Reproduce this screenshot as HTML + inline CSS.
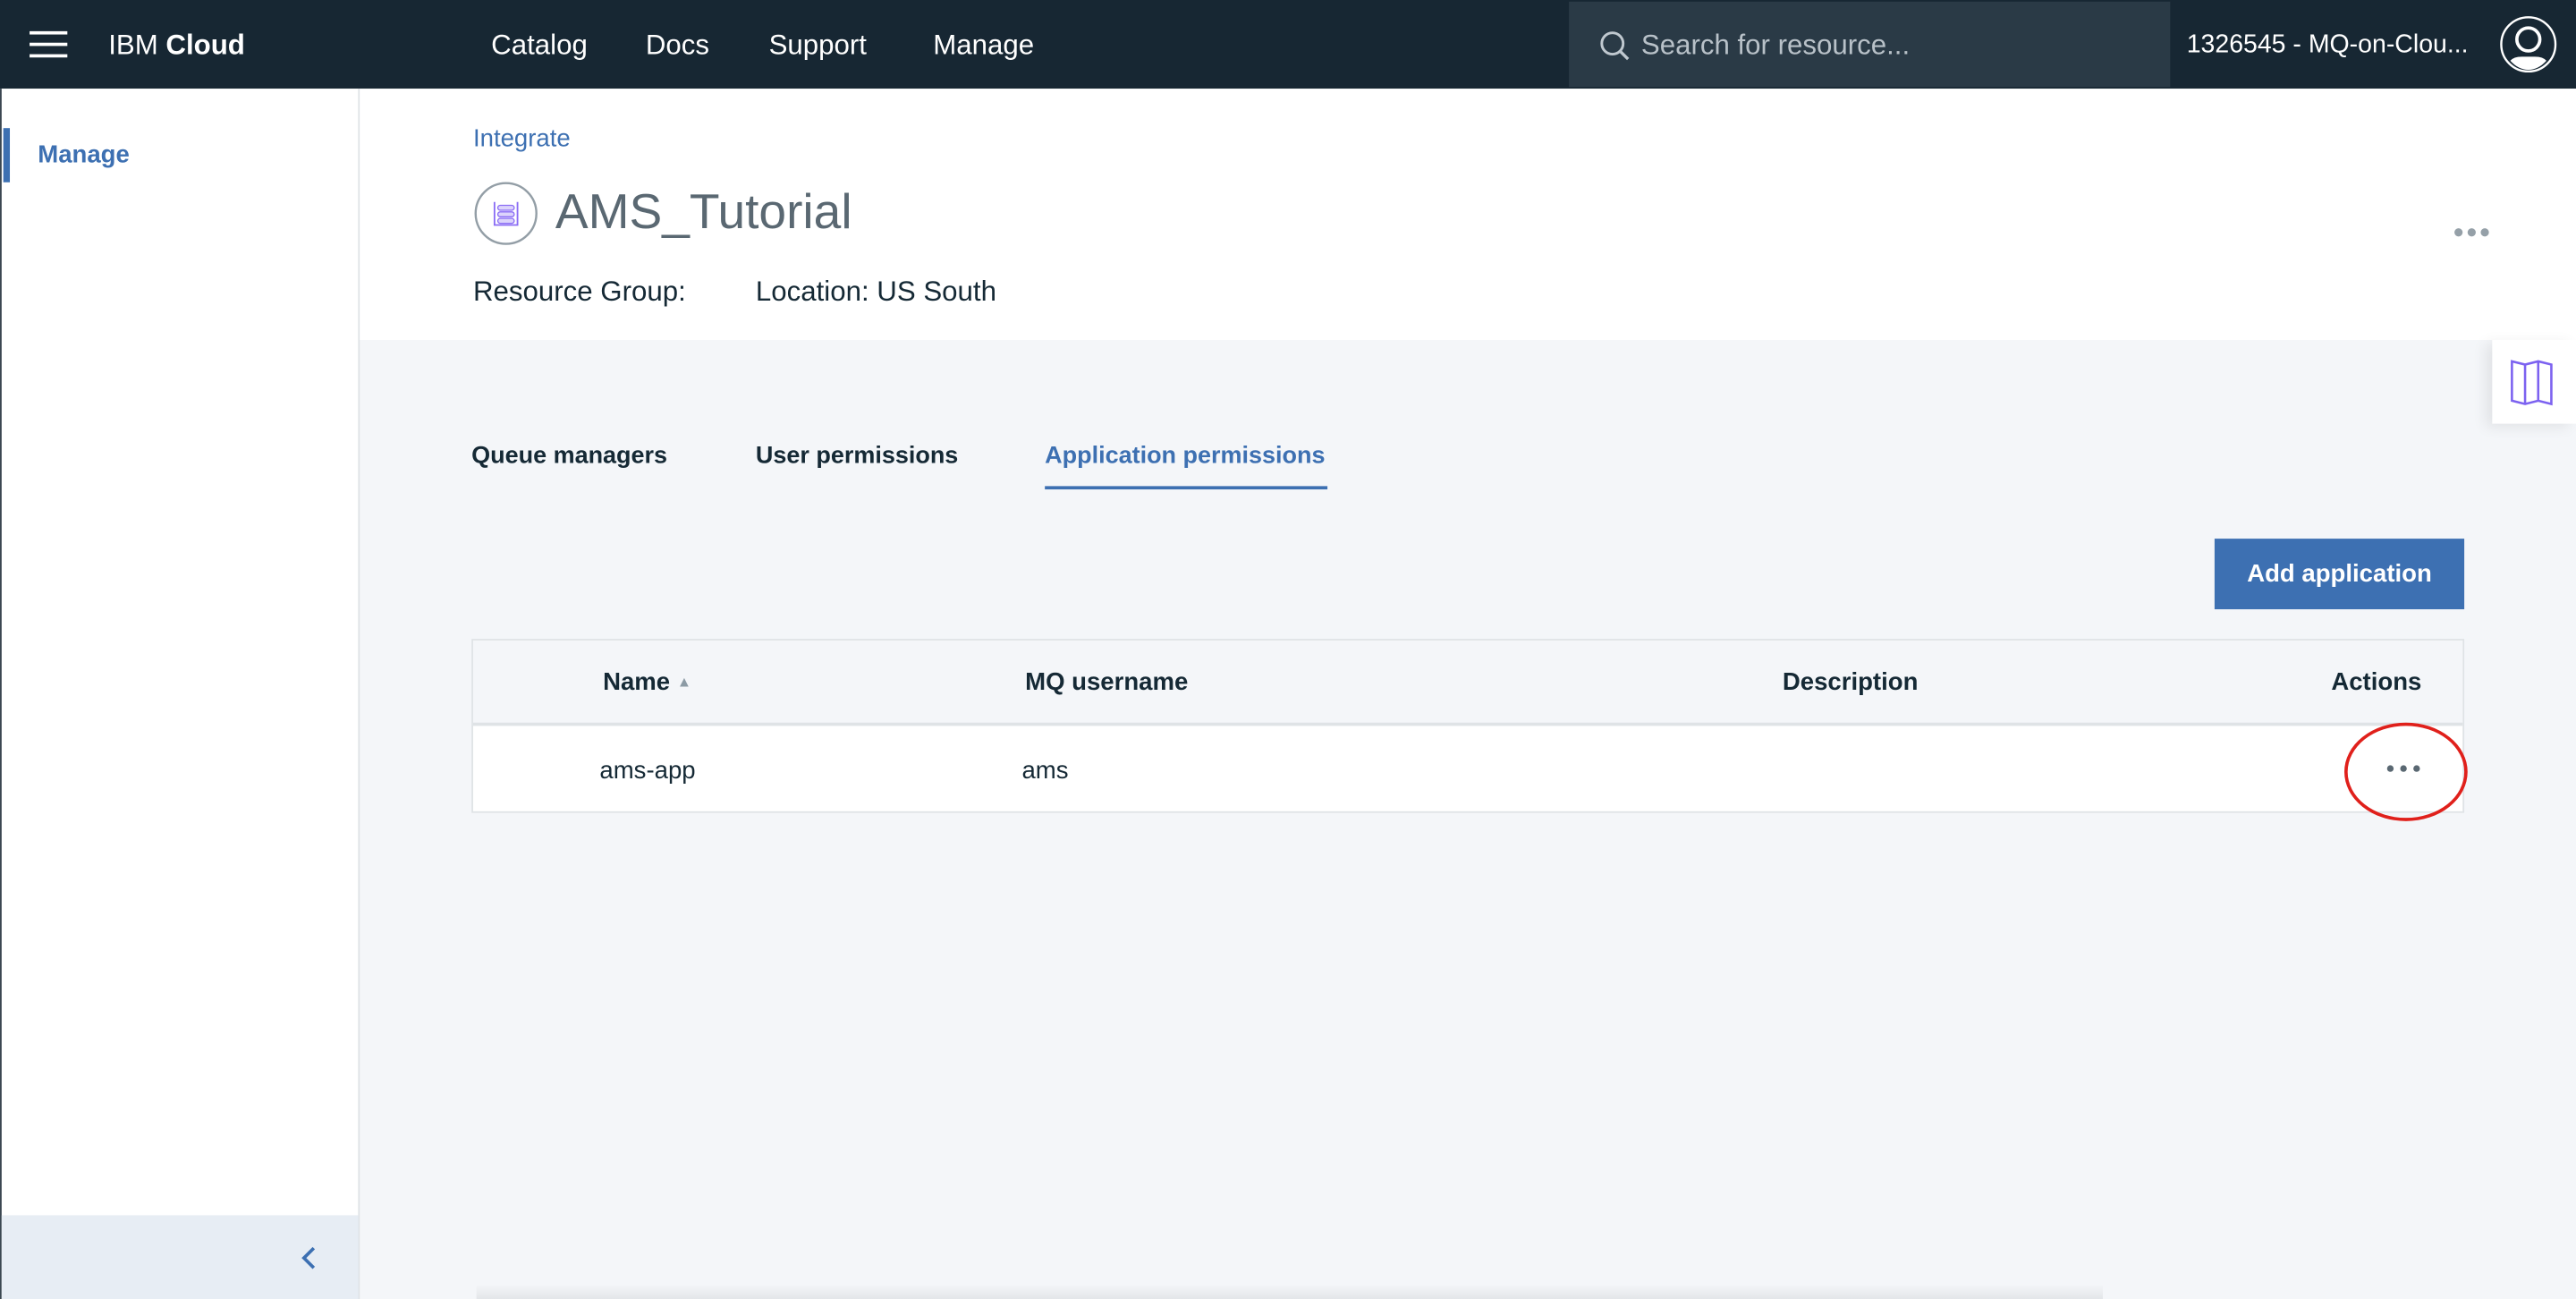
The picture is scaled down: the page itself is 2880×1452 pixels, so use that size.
<!DOCTYPE html>
<html><head><meta charset="utf-8"><style>
*{box-sizing:border-box;margin:0;padding:0}
html,body{width:2880px;height:1452px;overflow:hidden;background:#f4f6f9}
#w{position:absolute;left:0;top:0;width:1568px;height:791px;transform:scale(1.83673,1.8357);transform-origin:0 0;font-family:"Liberation Sans",sans-serif;background:#f4f6f9}
.a{position:absolute}
.hd{left:0;top:0;width:1568px;height:54px;background:#172733;color:#fff}
.hd span{position:absolute;top:18px;font-size:17px}
</style></head><body><div id="w">
<div class="a hd">
 <div class="a" style="left:18px;top:19px;width:23px;height:2px;background:#fff;box-shadow:0 7px 0 #fff,0 14px 0 #fff"></div>
 <span style="left:66px">IBM <b>Cloud</b></span>
 <span style="left:299px">Catalog</span><span style="left:393px">Docs</span><span style="left:468px">Support</span><span style="left:568px">Manage</span>
 <div class="a" style="left:955px;top:1px;width:366px;height:52px;background:#2a3a46"></div>
 <svg class="a" style="left:973px;top:18px" width="20" height="20" viewBox="0 0 20 20"><circle cx="8.5" cy="8.5" r="6.5" fill="none" stroke="#c0c8cf" stroke-width="1.6"/><path d="M13 13l5 5" stroke="#c0c8cf" stroke-width="1.8"/></svg>
 <span style="left:999px;color:#b8c1c8">Search for resource...</span>
 <span style="left:1331px;font-size:15.5px;top:19px">1326545 - MQ-on-Clou...</span>
 <svg class="a" style="left:1521px;top:9px" width="36" height="36" viewBox="0 0 36 36"><circle cx="18" cy="18" r="16.5" fill="none" stroke="#fff" stroke-width="1.3"/><circle cx="18" cy="15" r="7" fill="none" stroke="#fff" stroke-width="2"/><path d="M7 28 Q9 25.5 14 25.5 L22 25.5 Q27 25.5 29 28 Q24 33.5 18 33.5 Q12 33.5 7 28Z" fill="#fff"/></svg>
</div>
<div class="a" style="left:0;top:54px;width:219px;height:737px;background:#fff;border-right:1px solid #dfe3e6;border-left:1px solid #3a4650"></div>
<div class="a" style="left:2px;top:78px;width:4px;height:33px;background:#3d70b2"></div>
<div class="a" style="left:23px;top:86px;font-size:15px;font-weight:bold;color:#3d70b2">Manage</div>
<div class="a" style="left:1px;top:740px;width:217px;height:51px;background:#e7edf4"></div>
<svg class="a" style="left:182px;top:758px" width="14" height="16" viewBox="0 0 14 16"><path d="M9 2L3 8l6 6" fill="none" stroke="#3d70b2" stroke-width="2"/></svg>
<div class="a" style="left:219px;top:54px;width:1349px;height:153px;background:#fff"></div>
<div class="a" style="left:288px;top:76px;font-size:15px;color:#3d70b2">Integrate</div>
<svg class="a" style="left:288px;top:110px" width="40" height="40" viewBox="0 0 40 40"><circle cx="20" cy="20" r="18.5" fill="#fff" stroke="#939ea6" stroke-width="1.3"/><path d="M13 13v14h14V13" fill="none" stroke="#8a6cf5" stroke-width="1"/><rect x="15" y="15" width="10" height="3" rx="1.5" fill="#dcd4fb" stroke="#8a6cf5" stroke-width=".7"/><rect x="15" y="19" width="10" height="3" rx="1.5" fill="#dcd4fb" stroke="#8a6cf5" stroke-width=".7"/><rect x="15" y="23" width="10" height="3" rx="1.5" fill="#dcd4fb" stroke="#8a6cf5" stroke-width=".7"/></svg>
<div class="a" style="left:338px;top:113px;font-size:30px;color:#5a6872">AMS_Tutorial</div>
<div class="a" style="left:288px;top:168px;font-size:17px;color:#152935">Resource Group:</div>
<div class="a" style="left:460px;top:168px;font-size:17px;color:#152935">Location:&nbsp;US South</div>
<div class="a" style="left:1494px;top:139px;width:5px;height:5px;border-radius:50%;background:#95a0a8;box-shadow:8px 0 0 #95a0a8,16px 0 0 #95a0a8"></div>
<div class="a" style="left:1517px;top:207px;width:51px;height:51px;background:#fff;box-shadow:-4px 2px 8px rgba(0,0,0,.08)"></div>
<svg class="a" style="left:1527px;top:218px" width="32" height="30" viewBox="0 0 32 30"><path d="M2 2l8 2 8-2 8 2v24l-8-2-8 2-8-2z M10 4v24 M18 2v24" fill="none" stroke="#7c62f0" stroke-width="1.4"/></svg>
<div class="a" style="left:287px;top:270px;font-size:14.7px;font-weight:bold;color:#152935">Queue managers</div>
<div class="a" style="left:460px;top:270px;font-size:14.7px;font-weight:bold;color:#152935">User permissions</div>
<div class="a" style="left:636px;top:270px;font-size:14.7px;font-weight:bold;color:#3d70b2">Application permissions</div>
<div class="a" style="left:636px;top:296px;width:172px;height:2px;background:#3d70b2"></div>
<div class="a" style="left:1348px;top:328px;width:152px;height:43px;background:#3d70b2;color:#fff;font-size:15px;font-weight:bold;text-align:center;line-height:44px">Add application</div>
<div class="a" style="left:287px;top:389px;width:1213px;height:106px;border:1px solid #dfe3e6;background:#fff"></div>
<div class="a" style="left:288px;top:390px;width:1211px;height:52px;background:#f4f6f9;border-bottom:2px solid #dfe3e6"></div>
<div class="a" style="left:367px;top:407px;font-size:15px;font-weight:bold;color:#152935">Name <span style="font-size:9px;color:#8c9ba5;vertical-align:2px">▲</span></div>
<div class="a" style="left:624px;top:407px;font-size:15px;font-weight:bold;color:#152935">MQ username</div>
<div class="a" style="left:1085px;top:407px;font-size:15px;font-weight:bold;color:#152935">Description</div>
<div class="a" style="left:1419px;top:407px;font-size:15px;font-weight:bold;color:#152935">Actions</div>
<div class="a" style="left:365px;top:461px;font-size:15px;color:#152935">ams-app</div>
<div class="a" style="left:622px;top:461px;font-size:15px;color:#152935">ams</div>
<div class="a" style="left:1453px;top:466px;width:4px;height:4px;border-radius:50%;background:#5a6872;box-shadow:8px 0 0 #5a6872,16px 0 0 #5a6872"></div>
<div class="a" style="left:1427px;top:440px;width:75px;height:60px;border:2px solid #e0201b;border-radius:50%"></div>
<div class="a" style="left:290px;top:782px;width:990px;height:9px;background:linear-gradient(#f4f6f9,#e3e6e9)"></div>
</div></body></html>
